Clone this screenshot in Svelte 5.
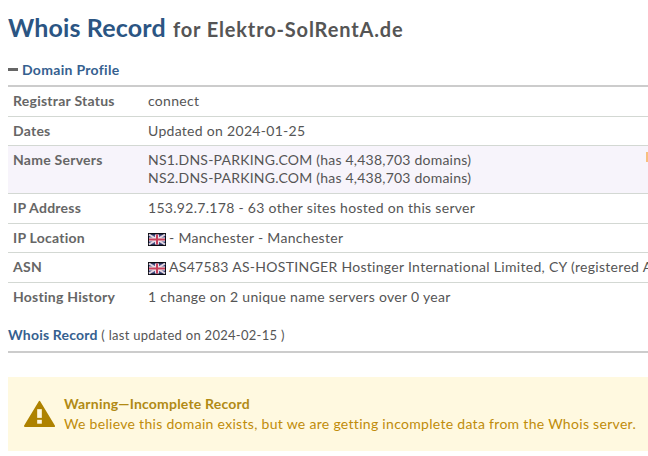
<script>
  const rows = [
    { label: 'Registrar Status', lines: ['connect'] },
    { label: 'Dates', lines: ['Updated on 2024-01-25'] },
    {
      label: 'Name Servers',
      lines: ['NS1.DNS-PARKING.COM (has 4,438,703 domains)', 'NS2.DNS-PARKING.COM (has 4,438,703 domains)'],
      shaded: true
    },
    { label: 'IP Address', lines: ['153.92.7.178 - 63 other sites hosted on this server'] },
    { label: 'IP Location', lines: ['- Manchester - Manchester'], flag: true },
    { label: 'ASN', lines: ['AS47583 AS-HOSTINGER Hostinger International Limited, CY (registered Apr 10, 2020)'], flag: true },
    { label: 'Hosting History', lines: ['1 change on 2 unique name servers over 0 year'] }
  ];
</script>

<div class="page">
  <h1>Whois Record <small>for Elektro-SolRentA.de</small></h1>

  <h2 class="profile"><span class="dash"></span>Domain Profile</h2>

  <div class="table">
    {#each rows as row}
      <div class="row" class:shaded={row.shaded}>
        <div class="label">{row.label}</div>
        <div class="value">
          {#each row.lines as line}
            <div class="line">
              {#if row.flag}
                <svg class="flag" viewBox="0 0 18 13" width="18" height="13">
                  <rect width="18" height="13" fill="#0c0c14" />
                  <rect x="1" y="1.5" width="16" height="10" fill="#44508a" />
                  <path d="M1 1.5L17 11.5M17 1.5L1 11.5" stroke="#e4d8e0" stroke-width="2" />
                  <path d="M9 1.5V11.5M1 6.5H17" stroke="#ece4ea" stroke-width="4" />
                  <path d="M9 1.5V11.5M1 6.5H17" stroke="#c8405c" stroke-width="2" />
                </svg>
              {/if}{line}
            </div>
          {/each}
        </div>
        {#if row.shaded}<span class="tag"></span>{/if}
      </div>
    {/each}
  </div>

  <h2 class="record">Whois Record <small>( last updated on 2024-02-15 )</small></h2>

  <div class="warning">
    <svg class="warn-icon" viewBox="0 0 32 28" width="31" height="28">
      <path d="M16 1.5L31 26.5H1Z" fill="#ae8200" stroke="#ae8200" stroke-width="2" stroke-linejoin="round" />
      <rect x="13.6" y="9" width="4.8" height="9" fill="#fff8e0" />
      <rect x="13.6" y="20" width="4.8" height="4" fill="#fff8e0" />
    </svg>
    <div class="warn-text">
      <strong>Warning—Incomplete Record</strong>
      <p>We believe this domain exists, but we are getting incomplete data from the Whois server.</p>
    </div>
  </div>
</div>

<style>
  :global(body) {
    margin: 0;
    background: #fff;
    overflow: hidden;
  }

  .page {
    width: 648px;
    height: 456px;
    overflow: hidden;
    box-sizing: border-box;
    padding: 11px 0 0 8px;
    font-family: Lato, "Open Sans", sans-serif;
    color: #555;
  }

  h1 {
    margin: 0;
    font-size: 25px;
    line-height: 32px;
    font-weight: 700;
    letter-spacing: 0.15px;
    color: #2b5583;
    white-space: nowrap;
  }

  h1 small {
    font-size: 20px;
    font-weight: 700;
    letter-spacing: 0.85px;
    color: #555;
    margin-left: 1px;
  }

  .profile {
    display: flex;
    align-items: center;
    margin: 16px 0 0;
    font-size: 14px;
    line-height: 17px;
    font-weight: 700;
    letter-spacing: 0.3px;
    color: #35608f;
  }

  .dash {
    width: 10px;
    height: 3px;
    margin-right: 4px;
    background: #666;
  }

  .table {
    width: 900px;
    margin-top: 7px;
    border-top: 2px solid #ccc;
  }

  .row {
    display: flex;
    position: relative;
    box-sizing: border-box;
    padding: 4px 0 5.6px;
    border-bottom: 1px solid #d3d8d3;
    font-size: 14px;
    line-height: 19px;
  }

  .row:last-child {
    border-bottom: 0;
  }

  .row.shaded {
    background: #f7f4fb;
    padding-top: 5px;
    padding-bottom: 6px;
    line-height: 18px;
  }

  .label {
    width: 140px;
    flex: none;
    padding-left: 5px;
    box-sizing: border-box;
    font-weight: 700;
    letter-spacing: 0.25px;
    color: #666;
  }

  .value {
    color: #555;
    white-space: pre;
    letter-spacing: 0.3px;
  }

  .shaded .value {
    letter-spacing: 0.22px;
  }

  .flag {
    vertical-align: -3px;
    margin-right: 3px;
  }

  .tag {
    position: absolute;
    left: 638px;
    top: 6px;
    width: 6px;
    height: 10px;
    background: #f8c080;
  }

  .record {
    margin: 13px 0 0;
    padding-bottom: 6px;
    font-size: 14px;
    line-height: 19px;
    font-weight: 700;
    letter-spacing: 0.2px;
    color: #35608f;
    border-bottom: 2px solid #ccc;
  }

  .record small {
    font-size: 13px;
    font-weight: 400;
    color: #555;
    letter-spacing: 0.28px;
  }

  .warning {
    display: flex;
    align-items: center;
    gap: 9px;
    width: 900px;
    height: 74px;
    box-sizing: border-box;
    margin-top: 24px;
    padding: 0 0 0 16px;
    background: #fff9e0;
    color: #c08c0a;
  }

  .warn-text {
    font-size: 14px;
    line-height: 20px;
    letter-spacing: 0.3px;
  }

  .warn-text strong {
    display: block;
    letter-spacing: 0.2px;
    color: #b18a14;
  }

  .warn-text p {
    margin: 0;
  }
</style>
